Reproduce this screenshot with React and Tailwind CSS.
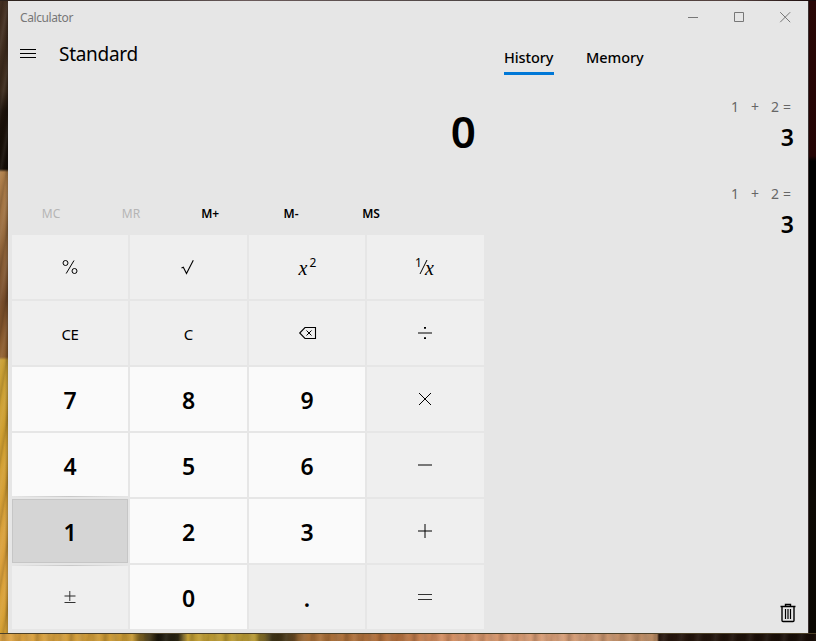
import React from 'react';

const line = { fill: 'none', stroke: '#000', strokeWidth: 1 };

function Glyph({ children, className = '' }) {
  return (
    <svg width="24" height="24" viewBox="0 0 24 24" className={className} {...line}>
      {children}
    </svg>
  );
}

function Key({ children, kind = 'op' }) {
  const base = 'flex items-center justify-center leading-none ';
  const kinds = {
    op: 'bg-[#efefef] text-[15px]',
    digit: 'bg-[#fafafa] text-[23px] font-semibold',
    pressed:
      'relative bg-[#d5d5d5] text-[23px] font-semibold shadow-[inset_0_0_0_1px_#c6c6c6,inset_0_1px_0_#b0b0b0,inset_0_-1px_0_#b4b4b4]',
    dot: 'bg-[#efefef] text-[23px] font-semibold',
  };
  return <button className={base + kinds[kind]}>{children}</button>;
}

function Digit({ n }) {
  return <span className="translate-y-px">{n}</span>;
}

function HistoryItem() {
  return (
    <div className="flex h-[87px] flex-col items-end">
      <div className="flex h-5 items-center pr-px text-[14px] leading-5 text-[#666]">
        <span className="w-[20px]">1</span>
        <span className="w-[20px]">+</span>
        <span className="w-[12px]">2</span>
        <span className="w-[9px]">=</span>
      </div>
      <div className="mt-[4px] h-8 text-[23px] leading-8 font-semibold">
        <span className="block translate-x-px">3</span>
      </div>
    </div>
  );
}

export default function App() {
  return (
    <div className="flex h-[641px] w-[816px] flex-col overflow-hidden bg-[#392f2c] font-['Noto_Sans','Open_Sans',sans-serif] text-black">
      <div className="h-px shrink-0 bg-[linear-gradient(90deg,#2b201b,#4a4140_20%,#6b5b5b_30%,#4c4443_60%,#55423f_90%,#180808)]" />
      <div className="flex h-[632px] shrink-0">
        <div className="w-2 shrink-0 bg-[repeating-linear-gradient(100deg,#0000_0,#00000020_3px,#0000_5px,#ffffff10_8px,#0000_11px),linear-gradient(90deg,#0000_60%,#00000040),linear-gradient(180deg,#443022_0,#3a291b_90px,#1d130b_110px,#130c06_168px,#b0804b_171px,#94683c_240px,#754b29_300px,#90602f_356px,#c9a036_359px,#cf9f30_430px,#dba03c_560px,#d6a133)]" />
        <main className="flex w-[800px] shrink-0 flex-col bg-[#e6e6e6]">
          <header className="flex h-8 shrink-0 items-center justify-between pl-3 text-[#777]">
            <span className="translate-y-px text-[12px] tracking-[-0.4px]">Calculator</span>
            <svg width="138" height="32" viewBox="0 0 138 32" fill="none" stroke="#777" strokeWidth="1">
              <path d="M18 16.5h10M64.5 11.5h9v9h-9zM110.2 11.2l10 10M120.2 11.2l-10 10" />
            </svg>
          </header>
          <div className="flex min-h-0 flex-1">
            <section className="flex w-[480px] flex-col">
              <div className="flex h-10 items-center pl-3">
                <svg width="16" height="12" viewBox="0 0 16 12" {...line}>
                  <path d="M0 2.5h16M0 6.5h16M0 10.5h16" />
                </svg>
                <h1 className="mt-[2px] ml-[23px] text-[19px] leading-[38px] tracking-[-0.3px]">Standard</h1>
              </div>
              <div className="flex h-[119px] items-start justify-end pr-3 text-[44px] font-semibold">
                <span className="mt-[28px] leading-[60px]">0</span>
              </div>
              <div className="flex h-[43px] items-center pl-[3px] text-[12px] font-semibold leading-none">
                <span className="w-20 text-center font-normal text-[#b5b5b5]">MC</span>
                <span className="w-20 text-center font-normal text-[#b5b5b5]">MR</span>
                <span className="w-20 pr-[2px] text-center tracking-[-0.2px]">M+</span>
                <span className="w-20 text-center">M-</span>
                <span className="w-20 text-center">MS</span>
              </div>
              <div className="ml-1 grid h-[394px] w-[472px] grid-cols-[116px_117px_116px_117px] grid-rows-6 gap-[2px]">
                <Key>
                  <Glyph>
                    <circle cx="7.5" cy="8" r="2.5" />
                    <circle cx="16.5" cy="16" r="2.5" />
                    <path d="M16 5.5 8.2 18.5" />
                  </Glyph>
                </Key>
                <Key>
                  <Glyph>
                    <path d="M4.5 13l1.8-.8L9.5 18.5 16.3 5.2" strokeWidth="1.1" />
                  </Glyph>
                </Key>
                <Key>
                  <span className="flex items-center">
                    <i className="translate-x-px translate-y-px font-['Liberation_Serif',serif] text-[20px]">x</i>
                    <span className="mb-[9px] ml-[3px] text-[12px]">2</span>
                  </span>
                </Key>
                <Key>
                  <span className="flex -translate-x-px items-center">
                    <span className="mb-[9px] text-[12px]">1</span>
                    <svg width="9" height="16" viewBox="0 0 9 16" className="-mx-[3px]" {...line}>
                      <path d="M8 1 1 15" />
                    </svg>
                    <i className="translate-y-px font-['Liberation_Serif',serif] text-[20px]">x</i>
                  </span>
                </Key>
                <Key>
                  <span className="translate-y-px tracking-[-0.3px]">CE</span>
                </Key>
                <Key>
                  <span className="translate-y-px">C</span>
                </Key>
                <Key>
                  <Glyph className="translate-x-px">
                    <path d="M9 6.5h10.5v11H9L3.7 12z" strokeWidth="1.1" />
                    <path d="M10.5 9.5l5 5M15.5 9.5l-5 5" />
                  </Glyph>
                </Key>
                <Key>
                  <Glyph className="-translate-x-px">
                    <path d="M5 12h14" stroke="#777" strokeWidth="2" />
                    <path d="M11 6.9h2M11 17.1h2" strokeWidth="1.8" />
                  </Glyph>
                </Key>
                <Key kind="digit"><Digit n="7" /></Key>
                <Key kind="digit"><Digit n="8" /></Key>
                <Key kind="digit"><Digit n="9" /></Key>
                <Key>
                  <Glyph className="-translate-x-px">
                    <path d="M6 6l12 12M18 6 6 18" />
                  </Glyph>
                </Key>
                <Key kind="digit"><Digit n="4" /></Key>
                <Key kind="digit"><Digit n="5" /></Key>
                <Key kind="digit"><Digit n="6" /></Key>
                <Key>
                  <Glyph className="-translate-x-px">
                    <path d="M5 12h14" stroke="#777" strokeWidth="2" />
                  </Glyph>
                </Key>
                <Key kind="pressed">
                  <Digit n="1" />
                  <span className="absolute inset-x-0 -top-[3px] h-px bg-[linear-gradient(90deg,#e6e6e6,#c8c8c8_50%,#e6e6e6)]" />
                  <span className="absolute inset-x-0 -bottom-[3px] h-px bg-[linear-gradient(90deg,#e6e6e6,#c8c8c8_50%,#e6e6e6)]" />
                </Key>
                <Key kind="digit"><Digit n="2" /></Key>
                <Key kind="digit"><Digit n="3" /></Key>
                <Key>
                  <Glyph className="-translate-x-px">
                    <path d="M5 12h14" stroke="#777" strokeWidth="2" />
                    <path d="M12 5v14" />
                  </Glyph>
                </Key>
                <Key>
                  <Glyph>
                    <path d="M6.5 11h11" stroke="#555" strokeWidth="1.3" />
                    <path d="M11.8 6v10M6.5 17.5h11" stroke="#333" />
                  </Glyph>
                </Key>
                <Key kind="digit"><Digit n="0" /></Key>
                <Key kind="dot"><Digit n="." /></Key>
                <Key>
                  <Glyph className="-translate-x-px">
                    <path d="M5 9.5h14M5 14.5h14" stroke="#333" strokeWidth="1.2" />
                  </Glyph>
                </Key>
              </div>
            </section>
            <aside className="flex flex-1 flex-col pl-4">
              <nav className="flex h-[42px] gap-8 text-[14.5px] font-medium">
                <div className="flex w-[50px] flex-col justify-end border-b-[3px] border-[#0078d7] pb-[3px]">
                  <span className="leading-6 tracking-[-0.1px]">History</span>
                </div>
                <div className="flex flex-col justify-end pb-[6px]">
                  <span className="leading-6 tracking-[-0.05px]">Memory</span>
                </div>
              </nav>
              <div className="flex-1 pt-[22px] pr-[15px]">
                <HistoryItem />
                <HistoryItem />
              </div>
              <div className="flex justify-end pr-[12px] pb-[10px]">
                <svg width="16" height="20" viewBox="0 0 16 20" {...line}>
                  <path d="M.5 3.5h15M5.5 3.5v-2h5v2" strokeWidth="1.4" />
                  <path d="M2 3.5v14q0 1 1 1h10q1 0 1-1v-14" strokeWidth="1.4" />
                  <path d="M5.5 6v10M8 6v10M10.5 6v10" strokeWidth="1.2" />
                </svg>
              </div>
            </aside>
          </div>
        </main>
        <div className="w-2 shrink-0 border-l border-[#3a3030] bg-[linear-gradient(180deg,#290706_0,#240404_155px,#000_160px,#000_390px,#0d0903_500px,#0a0702)]" />
      </div>
      <div className="h-2 shrink-0 border-t border-[#4c4027] bg-[repeating-linear-gradient(98deg,#0000_0,#00000018_3px,#0000_7px,#ffffff10_12px,#0000_17px),repeating-linear-gradient(84deg,#0000_0,#00000018_5px,#0000_11px),linear-gradient(90deg,#e0a545,#cf9c38_100px,#c89a34_132px,#5c4a1c_145px,#1a160c_158px,#2a2412_178px,#c4a035_188px,#b89a35_255px,#3a3014_272px,#4a3818_288px,#a87038_304px,#b5713f_400px,#d58f63_440px,#d9a07a_560px,#b98a62_657px,#28170e_659px,#160c05)]" />
    </div>
  );
}
